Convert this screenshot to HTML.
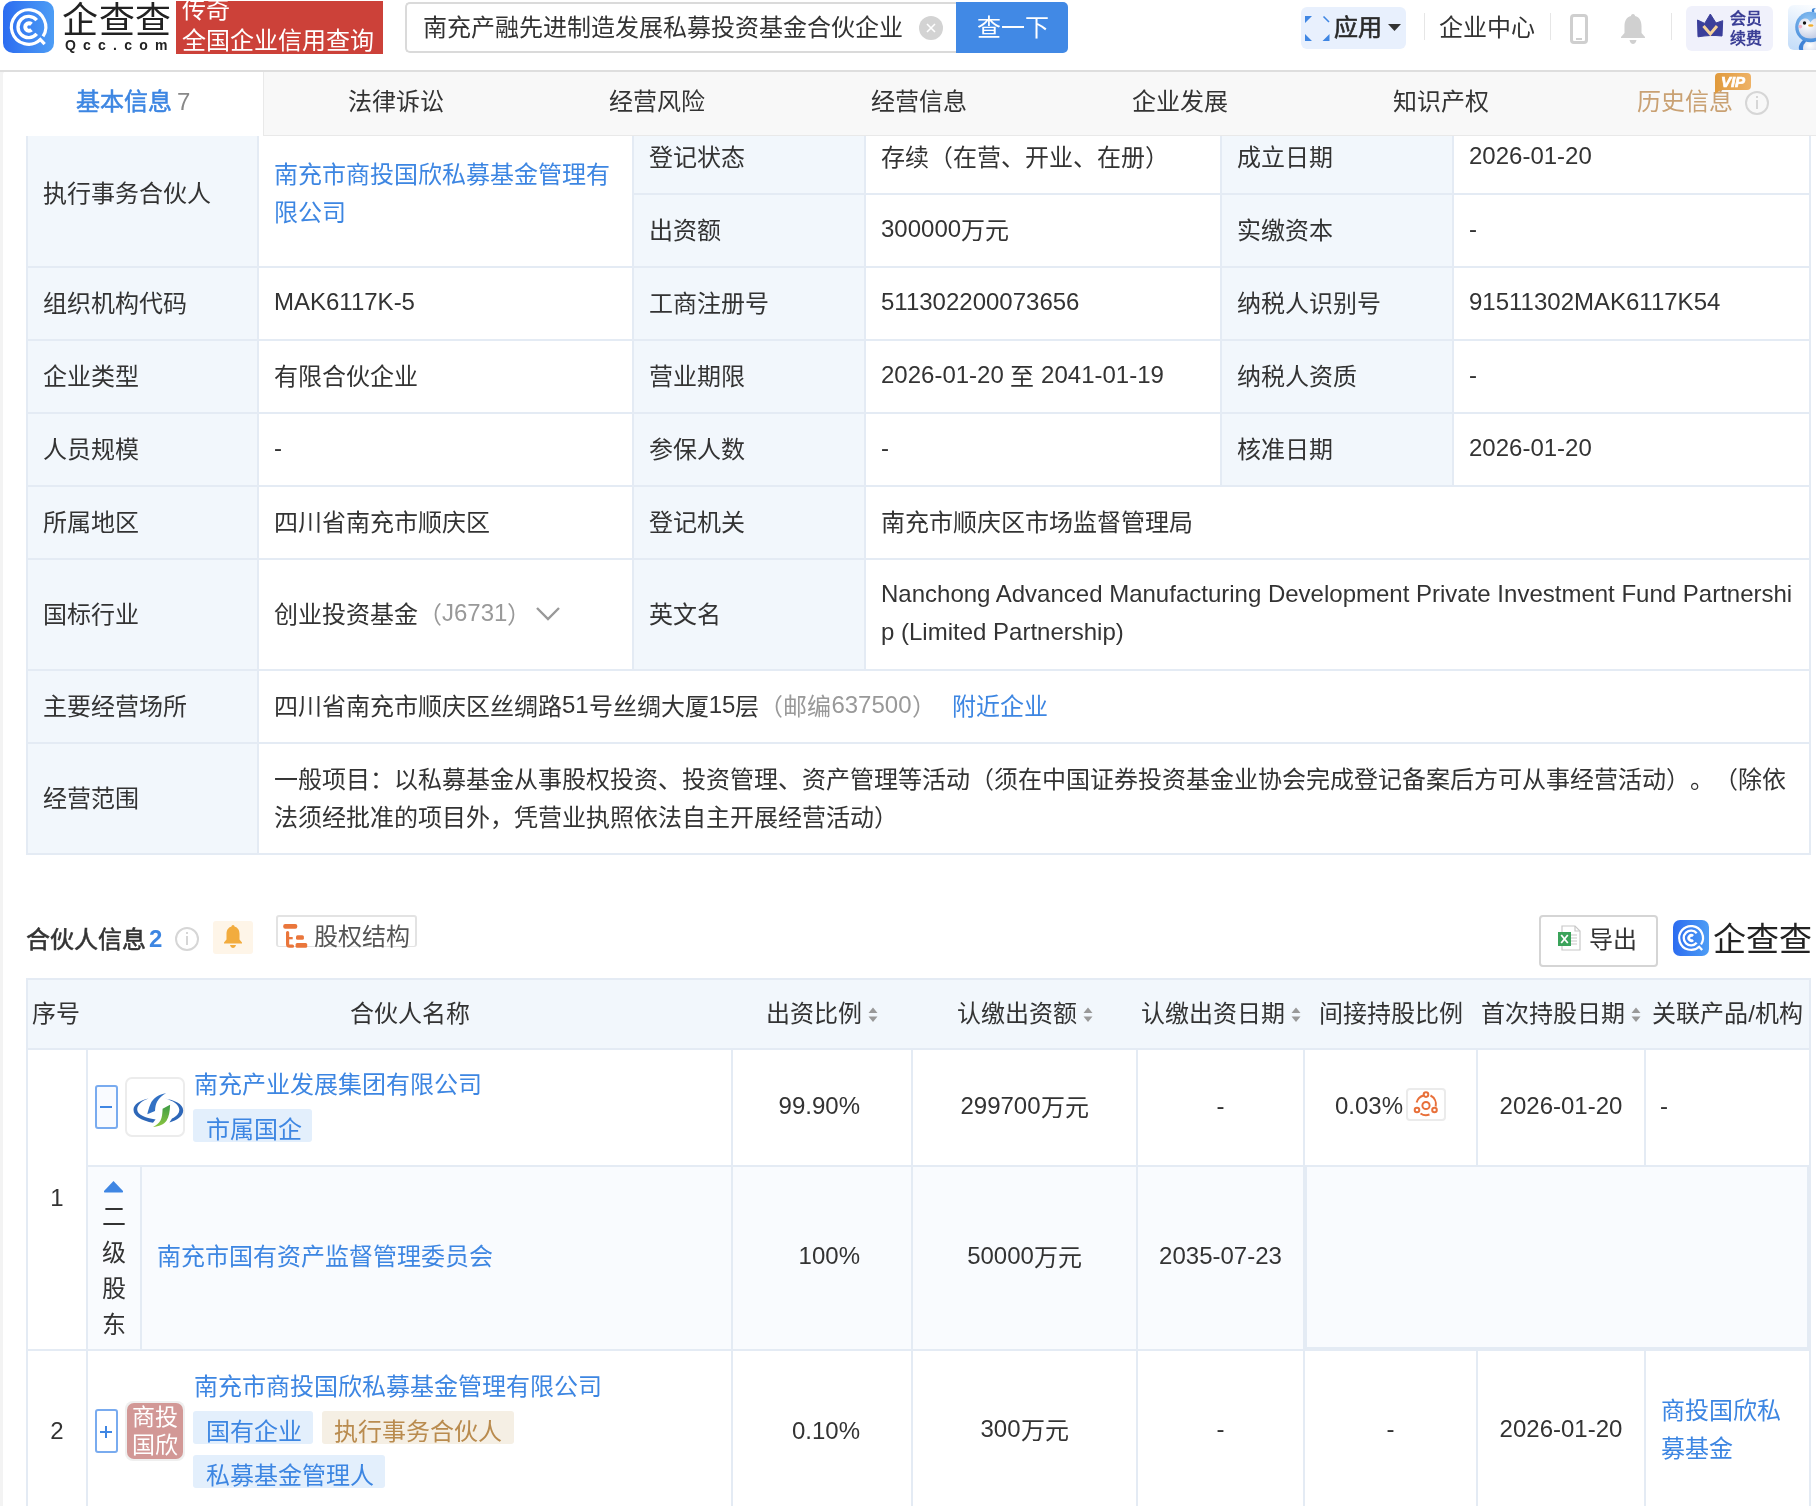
<!DOCTYPE html>
<html lang="zh-CN"><head><meta charset="utf-8"><title>qcc</title>
<style>
html,body{margin:0;padding:0;}
body{text-spacing-trim:space-all;width:1816px;height:1506px;overflow:hidden;position:relative;font-family:"Liberation Sans",sans-serif;font-size:24px;color:#333;line-height:38px;}
.a{position:absolute;}
.t{line-height:38px;}
svg{display:inline-block;}
</style></head><body>
<div id="root" style="position:absolute;left:0;top:0;width:1816px;height:1506px;overflow:hidden;will-change:transform">
<div class="a" style="left:0;top:0;width:1816px;height:1506px;background:#f3f3f3"></div>
<div class="a" style="left:0;top:0;width:1816px;height:71px;background:#fff"></div>
<div class="a" style="left:3px;top:71px;width:1813px;height:1435px;background:#fff;border-top-left-radius:4px"></div>
<div class="a" style="left:3px;top:1px;width:51px;height:52px;border-radius:10px;background:linear-gradient(90deg,#2c6cf0,#4d9df5);overflow:hidden">
<svg width="51" height="52" viewBox="0 0 51 52" style="position:absolute;left:0;top:0">
<path d="M40.03 35.37 A17.2 17.2 0 1 0 37.33 38.58" fill="none" stroke="#fff" stroke-width="3.2"/>
<path d="M36.24 37.41 L41.63 43.19" stroke="#fff" stroke-width="3.2"/>
<path d="M33.72 19.18 A10.6 10.6 0 1 0 33.72 32.82" fill="none" stroke="#fff" stroke-width="3.4"/>
<path d="M28.5 23.2 A3.75 3.75 0 1 0 28.5 28.8" fill="none" stroke="#fff" stroke-width="4"/>
</svg></div>
<div class="a" style="left:62px;top:1px;font-size:36px;line-height:40px;color:#222;letter-spacing:0.5px;font-weight:400">企查查</div>
<div class="a" style="left:65px;top:37px;font-size:14px;line-height:16px;color:#222;font-weight:bold;letter-spacing:7.2px">Qcc.com</div>
<div class="a" style="left:176px;top:1px;width:207px;height:53px;background:#cc4139;overflow:hidden"><div style="position:absolute;left:6px;top:-7px;color:#fff;font-size:24px;line-height:31px;white-space:nowrap">传奇<br>全国企业信用查询</div></div>
<div class="a" style="left:405px;top:2px;width:551px;height:51px;box-sizing:border-box;border:2px solid #dadada;border-right:none;border-radius:5px 0 0 5px;background:#fff"></div>
<div class="a" style="left:423px;top:10px;font-size:24px;line-height:36px;color:#333">南充产融先进制造发展私募投资基金合伙企业</div>
<div class="a" style="left:919px;top:16px;width:24px;height:24px;border-radius:50%;background:#d3d3d3"><svg width="24" height="24" style="position:absolute;left:0;top:0"><path d="M8 8 L16 16 M16 8 L8 16" stroke="#fff" stroke-width="1.6"/></svg></div>
<div class="a" style="left:956px;top:2px;width:112px;height:51px;background:#4189e5;border-radius:0 5px 5px 0"></div>
<div class="a" style="left:977px;top:9px;font-size:24px;line-height:38px;color:#fff">查一下</div>
<div class="a" style="left:1301px;top:7px;width:105px;height:42px;background:#e8f0fd;border-radius:6px"></div>
<svg class="a" style="left:1304px;top:15px" width="27" height="27" viewBox="0 0 27 27">
<path d="M1 1 H8 L1 8 Z M1 26 V19 L8 26 Z M25.5 26 H18.5 L25.5 19 Z" fill="#3f86e3"/>
<path d="M19.5 1.5 L25 7" stroke="#3f86e3" stroke-width="1.6"/></svg>
<div class="a" style="left:1334px;top:9px;font-size:24px;line-height:38px;color:#2a2a2a;-webkit-text-stroke:0.6px #2a2a2a">应用</div>
<svg class="a" style="left:1388px;top:24px" width="14" height="8"><path d="M0 0 H13 L6.5 7 Z" fill="#333"/></svg>
<div class="a " style="left:1424px;top:13px;width:1px;height:27px;background:#e6e6e6"></div>
<div class="a" style="left:1439px;top:9px;font-size:24px;line-height:38px;color:#333">企业中心</div>
<div class="a " style="left:1550px;top:13px;width:1px;height:27px;background:#e6e6e6"></div>
<div class="a" style="left:1570px;top:14px;width:18px;height:30px;box-sizing:border-box;border:3px solid #cfcfcf;border-radius:4px"></div>
<div class="a" style="left:1576px;top:38px;width:6px;height:2px;background:#cfcfcf"></div>
<svg class="a" style="left:1620px;top:13px" width="26" height="32" viewBox="0 0 26 32">
<path d="M13 1 C14.5 1 15 2 15 3 C19.5 4 21.5 8 21.5 13 V20 L25 24 V25 H1 V24 L4.5 20 V13 C4.5 8 6.5 4 11 3 C11 2 11.5 1 13 1 Z" fill="#d0d0d0"/>
<path d="M9.5 27 H16.5 C16 29.5 14.5 31 13 31 C11.5 31 10 29.5 9.5 27 Z" fill="#d0d0d0"/></svg>
<div class="a " style="left:1671px;top:13px;width:1px;height:27px;background:#e6e6e6"></div>
<div class="a" style="left:1686px;top:6px;width:87px;height:45px;background:#f0f1fb;border-radius:6px"></div>
<svg class="a" style="left:1697px;top:14px" width="27" height="24" viewBox="0 0 27 24">
<path d="M0.5 6 L7.7 9.4 L13.3 0 L19 9 L25.7 6.7 L25 22 C17 21 9 21.5 1 22.8 Z" fill="#3b3f9a" stroke="#3b3f9a" stroke-width="1" stroke-linejoin="round"/>
<path d="M6.5 12 L13.3 20 L20 12" fill="none" stroke="#f6d39a" stroke-width="3"/></svg>
<div class="a" style="left:1730px;top:9px;font-size:16px;line-height:20px;color:#3b3f96;font-weight:bold">会员<br>续费</div>
<div class="a" style="left:1788px;top:5px;width:40px;height:45px;border-radius:6px;background:linear-gradient(200deg,#fbfdff 10%,#dcebfc 55%,#c3dcf8);overflow:hidden">
<svg width="40" height="45" viewBox="0 0 40 45" style="position:absolute;left:0;top:0">
<defs><radialGradient id="hd" cx="0.45" cy="0.3" r="0.8"><stop offset="0" stop-color="#8cc3f3"/><stop offset="1" stop-color="#3f86d8"/></radialGradient>
<radialGradient id="bd" cx="0.35" cy="0.35" r="0.8"><stop offset="0" stop-color="#ffffff"/><stop offset="1" stop-color="#b9c4e0"/></radialGradient></defs>
<path d="M15 35 C11 39 10 43 11.5 45 L16 45 C17 41 18 37 19 35 Z" fill="#3f82d6"/>
<ellipse cx="25" cy="43" rx="10" ry="9" fill="url(#bd)"/>
<path d="M24 7 C23 4 25 2.5 28 3.5 C26 4 25.5 5.5 26.5 7 Z" fill="#3f86d8"/>
<circle cx="22.5" cy="22" r="15.3" fill="url(#hd)"/>
<path d="M10.5 22 C10.5 16 14 13.5 17.5 13.5 C20 13.5 21.5 15.5 22.5 17.5 C23.5 15.5 25.5 13.5 28 13.5 C32 13.5 36 17 36 23 C36 30 30 33.5 23 33.5 C15 33.5 10.5 29 10.5 22 Z" fill="url(#bd)"/>
<circle cx="16.5" cy="18" r="1.7" fill="#151515"/>
<circle cx="12.4" cy="21.6" r="1.8" fill="#f3b3c8"/>
<ellipse cx="22.8" cy="20.5" rx="2.7" ry="1.3" fill="#efae2f"/>
</svg></div>
<div class="a " style="left:0px;top:70px;width:1816px;height:2px;background:#dedede"></div>
<div class="a" style="left:263px;top:72px;width:1553px;height:63px;background:#f8f8f8;border-left:1px solid #e9e9e9;border-bottom:1px solid #e9e9e9"></div>
<div class="a" style="left:76px;top:83px;font-size:24px;line-height:38px;color:#3d86e2;-webkit-text-stroke:0.55px #3d86e2">基本信息</div>
<div class="a" style="left:177px;top:83px;font-size:24px;line-height:38px;color:#888">7</div>
<div class="a" style="left:348px;top:83px;font-size:24px;line-height:38px;color:#333">法律诉讼</div>
<div class="a" style="left:609px;top:83px;font-size:24px;line-height:38px;color:#333">经营风险</div>
<div class="a" style="left:871px;top:83px;font-size:24px;line-height:38px;color:#333">经营信息</div>
<div class="a" style="left:1132px;top:83px;font-size:24px;line-height:38px;color:#333">企业发展</div>
<div class="a" style="left:1393px;top:83px;font-size:24px;line-height:38px;color:#333">知识产权</div>
<div class="a" style="left:1637px;top:83px;font-size:24px;line-height:38px;color:#c9a173">历史信息</div>
<svg class="a" style="left:1714px;top:73px" width="38" height="22" viewBox="0 0 38 22">
<defs><linearGradient id="vg" x1="0" x2="1"><stop offset="0" stop-color="#e09a3c"/><stop offset="1" stop-color="#eeb266"/></linearGradient></defs>
<path d="M5 0 H33 Q37 0 37 4 V13 Q37 17 33 17 H7 L1 21 V4 Q1 0 5 0 Z" fill="url(#vg)"/>
<text x="19" y="14" text-anchor="middle" font-family="Liberation Sans" font-weight="bold" font-style="italic" font-size="15" fill="#fff" stroke="#fff" stroke-width="0.7">VIP</text></svg>
<div class="a" style="left:1745px;top:91px;width:24px;height:24px;box-sizing:border-box;border:2px solid #d6d6d6;border-radius:50%"></div>
<div class="a" style="left:1756px;top:96px;width:2px;height:2px;background:#d6d6d6"></div>
<div class="a" style="left:1756px;top:100px;width:2px;height:9px;background:#d6d6d6"></div>
<div class="a" style="left:0;top:136px;width:1816px;height:720px;overflow:hidden">
<div class="a" style="left:28px;top:-14px;width:229px;height:144px;display:flex;align-items:center;padding:0 15px;box-sizing:border-box;background:#f2f7fc;"><div class="t">执行事务合伙人</div></div>
<div class="a" style="left:259px;top:-14px;width:373px;height:144px;display:flex;align-items:center;padding:0 15px;box-sizing:border-box;"><div class="t"><span style="color:#3d86e2">南充市商投国欣私募基金管理有限公司</span></div></div>
<div class="a" style="left:634px;top:-14px;width:230px;height:71px;display:flex;align-items:center;padding:0 15px;box-sizing:border-box;background:#f2f7fc;"><div class="t">登记状态</div></div>
<div class="a" style="left:866px;top:-14px;width:354px;height:71px;display:flex;align-items:center;padding:0 15px;box-sizing:border-box;"><div class="t">存续（在营、开业、在册）</div></div>
<div class="a" style="left:1222px;top:-14px;width:230px;height:71px;display:flex;align-items:center;padding:0 15px;box-sizing:border-box;background:#f2f7fc;"><div class="t">成立日期</div></div>
<div class="a" style="left:1454px;top:-14px;width:355px;height:71px;display:flex;align-items:center;padding:0 15px;box-sizing:border-box;"><div class="t"><span style="position:relative;top:-2px">2026-01-20</span></div></div>
<div class="a" style="left:634px;top:59px;width:230px;height:71px;display:flex;align-items:center;padding:0 15px;box-sizing:border-box;background:#f2f7fc;"><div class="t">出资额</div></div>
<div class="a" style="left:866px;top:59px;width:354px;height:71px;display:flex;align-items:center;padding:0 15px;box-sizing:border-box;"><div class="t"><span style="position:relative;top:-2px">300000</span>万元</div></div>
<div class="a" style="left:1222px;top:59px;width:230px;height:71px;display:flex;align-items:center;padding:0 15px;box-sizing:border-box;background:#f2f7fc;"><div class="t">实缴资本</div></div>
<div class="a" style="left:1454px;top:59px;width:355px;height:71px;display:flex;align-items:center;padding:0 15px;box-sizing:border-box;"><div class="t"><span style="position:relative;top:-2px">-</span></div></div>
<div class="a" style="left:28px;top:132px;width:229px;height:71px;display:flex;align-items:center;padding:0 15px;box-sizing:border-box;background:#f2f7fc;"><div class="t">组织机构代码</div></div>
<div class="a" style="left:259px;top:132px;width:373px;height:71px;display:flex;align-items:center;padding:0 15px;box-sizing:border-box;"><div class="t"><span style="position:relative;top:-2px">MAK6117K-5</span></div></div>
<div class="a" style="left:634px;top:132px;width:230px;height:71px;display:flex;align-items:center;padding:0 15px;box-sizing:border-box;background:#f2f7fc;"><div class="t">工商注册号</div></div>
<div class="a" style="left:866px;top:132px;width:354px;height:71px;display:flex;align-items:center;padding:0 15px;box-sizing:border-box;"><div class="t"><span style="position:relative;top:-2px">511302200073656</span></div></div>
<div class="a" style="left:1222px;top:132px;width:230px;height:71px;display:flex;align-items:center;padding:0 15px;box-sizing:border-box;background:#f2f7fc;"><div class="t">纳税人识别号</div></div>
<div class="a" style="left:1454px;top:132px;width:355px;height:71px;display:flex;align-items:center;padding:0 15px;box-sizing:border-box;"><div class="t"><span style="position:relative;top:-2px">91511302MAK6117K54</span></div></div>
<div class="a" style="left:28px;top:205px;width:229px;height:71px;display:flex;align-items:center;padding:0 15px;box-sizing:border-box;background:#f2f7fc;"><div class="t">企业类型</div></div>
<div class="a" style="left:259px;top:205px;width:373px;height:71px;display:flex;align-items:center;padding:0 15px;box-sizing:border-box;"><div class="t">有限合伙企业</div></div>
<div class="a" style="left:634px;top:205px;width:230px;height:71px;display:flex;align-items:center;padding:0 15px;box-sizing:border-box;background:#f2f7fc;"><div class="t">营业期限</div></div>
<div class="a" style="left:866px;top:205px;width:354px;height:71px;display:flex;align-items:center;padding:0 15px;box-sizing:border-box;"><div class="t"><span style="position:relative;top:-2px">2026-01-20</span> 至 <span style="position:relative;top:-2px">2041-01-19</span></div></div>
<div class="a" style="left:1222px;top:205px;width:230px;height:71px;display:flex;align-items:center;padding:0 15px;box-sizing:border-box;background:#f2f7fc;"><div class="t">纳税人资质</div></div>
<div class="a" style="left:1454px;top:205px;width:355px;height:71px;display:flex;align-items:center;padding:0 15px;box-sizing:border-box;"><div class="t"><span style="position:relative;top:-2px">-</span></div></div>
<div class="a" style="left:28px;top:278px;width:229px;height:71px;display:flex;align-items:center;padding:0 15px;box-sizing:border-box;background:#f2f7fc;"><div class="t">人员规模</div></div>
<div class="a" style="left:259px;top:278px;width:373px;height:71px;display:flex;align-items:center;padding:0 15px;box-sizing:border-box;"><div class="t"><span style="position:relative;top:-2px">-</span></div></div>
<div class="a" style="left:634px;top:278px;width:230px;height:71px;display:flex;align-items:center;padding:0 15px;box-sizing:border-box;background:#f2f7fc;"><div class="t">参保人数</div></div>
<div class="a" style="left:866px;top:278px;width:354px;height:71px;display:flex;align-items:center;padding:0 15px;box-sizing:border-box;"><div class="t"><span style="position:relative;top:-2px">-</span></div></div>
<div class="a" style="left:1222px;top:278px;width:230px;height:71px;display:flex;align-items:center;padding:0 15px;box-sizing:border-box;background:#f2f7fc;"><div class="t">核准日期</div></div>
<div class="a" style="left:1454px;top:278px;width:355px;height:71px;display:flex;align-items:center;padding:0 15px;box-sizing:border-box;"><div class="t"><span style="position:relative;top:-2px">2026-01-20</span></div></div>
<div class="a" style="left:28px;top:351px;width:229px;height:71px;display:flex;align-items:center;padding:0 15px;box-sizing:border-box;background:#f2f7fc;"><div class="t">所属地区</div></div>
<div class="a" style="left:259px;top:351px;width:373px;height:71px;display:flex;align-items:center;padding:0 15px;box-sizing:border-box;"><div class="t">四川省南充市顺庆区</div></div>
<div class="a" style="left:634px;top:351px;width:230px;height:71px;display:flex;align-items:center;padding:0 15px;box-sizing:border-box;background:#f2f7fc;"><div class="t">登记机关</div></div>
<div class="a" style="left:866px;top:351px;width:943px;height:71px;display:flex;align-items:center;padding:0 15px;box-sizing:border-box;"><div class="t">南充市顺庆区市场监督管理局</div></div>
<div class="a" style="left:28px;top:424px;width:229px;height:109px;display:flex;align-items:center;padding:0 15px;box-sizing:border-box;background:#f2f7fc;"><div class="t">国标行业</div></div>
<div class="a" style="left:259px;top:424px;width:373px;height:109px;display:flex;align-items:center;padding:0 15px;box-sizing:border-box;"><div class="t">创业投资基金<span style="color:#999">（<span style="position:relative;top:-2px">J6731</span>）</span><svg width="26" height="16" style="position:relative;top:-1px;margin-left:4px" viewBox="0 0 26 16"><path d="M2 2 L13 13 L24 2" fill="none" stroke="#999" stroke-width="2.4"/></svg></div></div>
<div class="a" style="left:634px;top:424px;width:230px;height:109px;display:flex;align-items:center;padding:0 15px;box-sizing:border-box;background:#f2f7fc;"><div class="t">英文名</div></div>
<div class="a" style="left:866px;top:424px;width:943px;height:109px;display:flex;align-items:center;padding:0 15px;box-sizing:border-box;"><div class="t"><span style="word-break:break-all"><span style="position:relative;top:-2px">Nanchong Advanced Manufacturing Development Private Investment Fund Partnership (Limited Partnership)</span></span></div></div>
<div class="a" style="left:28px;top:535px;width:229px;height:71px;display:flex;align-items:center;padding:0 15px;box-sizing:border-box;background:#f2f7fc;"><div class="t">主要经营场所</div></div>
<div class="a" style="left:259px;top:535px;width:1550px;height:71px;display:flex;align-items:center;padding:0 15px;box-sizing:border-box;"><div class="t">四川省南充市顺庆区丝绸路<span style="position:relative;top:-2px">51</span>号丝绸大厦<span style="position:relative;top:-2px">15</span>层<span style="color:#999">（邮编<span style="position:relative;top:-2px">637500</span>）</span><span style="color:#3d86e2;margin-left:16px">附近企业</span></div></div>
<div class="a" style="left:28px;top:608px;width:229px;height:109px;display:flex;align-items:center;padding:0 15px;box-sizing:border-box;background:#f2f7fc;"><div class="t">经营范围</div></div>
<div class="a" style="left:259px;top:608px;width:1550px;height:109px;display:flex;align-items:center;padding:0 15px;box-sizing:border-box;"><div class="t">一般项目：以私募基金从事股权投资、投资管理、资产管理等活动（须在中国证券投资基金业协会完成登记备案后方可从事经营活动）。（除依<br>法须经批准的项目外，凭营业执照依法自主开展经营活动）</div></div>
<div class="a" style="left:26px;top:130px;width:1785px;height:2px;background:#e4ebf4"></div>
<div class="a" style="left:26px;top:203px;width:1785px;height:2px;background:#e4ebf4"></div>
<div class="a" style="left:26px;top:276px;width:1785px;height:2px;background:#e4ebf4"></div>
<div class="a" style="left:26px;top:349px;width:1785px;height:2px;background:#e4ebf4"></div>
<div class="a" style="left:26px;top:422px;width:1785px;height:2px;background:#e4ebf4"></div>
<div class="a" style="left:26px;top:533px;width:1785px;height:2px;background:#e4ebf4"></div>
<div class="a" style="left:26px;top:606px;width:1785px;height:2px;background:#e4ebf4"></div>
<div class="a" style="left:26px;top:717px;width:1785px;height:2px;background:#e4ebf4"></div>
<div class="a" style="left:632px;top:57px;width:1179px;height:2px;background:#e4ebf4"></div>
<div class="a" style="left:26px;top:-16px;width:2px;height:735px;background:#e4ebf4"></div>
<div class="a" style="left:1809px;top:-16px;width:2px;height:735px;background:#e4ebf4"></div>
<div class="a" style="left:257px;top:-16px;width:2px;height:735px;background:#e4ebf4"></div>
<div class="a" style="left:632px;top:-16px;width:2px;height:549px;background:#e4ebf4"></div>
<div class="a" style="left:864px;top:-16px;width:2px;height:549px;background:#e4ebf4"></div>
<div class="a" style="left:1220px;top:-16px;width:2px;height:365px;background:#e4ebf4"></div>
<div class="a" style="left:1452px;top:-16px;width:2px;height:365px;background:#e4ebf4"></div>
</div>
<div class="a" style="left:26px;top:921px;font-size:24px;line-height:38px;color:#333;-webkit-text-stroke:0.55px #333">合伙人信息</div>
<div class="a" style="left:149px;top:920px;font-size:24px;line-height:38px;color:#3d86e2;font-weight:bold">2</div>
<div class="a" style="left:175px;top:927px;width:24px;height:24px;box-sizing:border-box;border:2px solid #d6d6d6;border-radius:50%"></div>
<div class="a" style="left:186px;top:932px;width:2px;height:2px;background:#d6d6d6"></div>
<div class="a" style="left:186px;top:936px;width:2px;height:9px;background:#d6d6d6"></div>
<div class="a" style="left:213px;top:921px;width:40px;height:33px;background:#fef5e8;border-radius:3px"></div>
<svg class="a" style="left:223px;top:924px" width="20" height="25" viewBox="0 0 20 25">
<path d="M10 1 C11 1 11.5 1.8 11.5 2.5 C15 3.5 16.5 6.5 16.5 10 V15.5 L19 18.5 V19.5 H1 V18.5 L3.5 15.5 V10 C3.5 6.5 5 3.5 8.5 2.5 C8.5 1.8 9 1 10 1 Z" fill="#f2ac3e"/>
<path d="M7 21 H13 C12.5 23 11.3 24 10 24 C8.7 24 7.5 23 7 21 Z" fill="#f2ac3e"/></svg>
<div class="a" style="left:276px;top:915px;width:141px;height:32px;box-sizing:border-box;border:2px solid #e3e3e3;border-bottom:1px solid #e3e3e3;border-radius:3px"></div>
<svg class="a" style="left:283px;top:923px" width="26" height="26" viewBox="0 0 26 26">
<rect x="0.2" y="1.1" width="14.1" height="4.6" rx="2" fill="#ea763b"/>
<path d="M4.6 9.5 V21.3 Q4.6 23.2 6.6 23.2 H9.5" fill="none" stroke="#ea763b" stroke-width="3.2" stroke-linecap="round"/>
<rect x="4.8" y="14" width="4.9" height="2.3" fill="#ea763b"/>
<rect x="13" y="12.3" width="7.9" height="4.5" rx="1.5" fill="#ea763b"/>
<rect x="12.6" y="20.1" width="11.6" height="4.6" rx="1.5" fill="#ea763b"/></svg>
<div class="a" style="left:314px;top:918px;font-size:24px;line-height:38px;color:#555">股权结构</div>
<div class="a" style="left:1539px;top:915px;width:119px;height:52px;box-sizing:border-box;border:2px solid #d5d5d5;border-radius:4px"></div>
<svg class="a" style="left:1557px;top:925px" width="25" height="26" viewBox="0 0 25 26">
<path d="M5 1 H18 L23 6 V25 H5 Z" fill="#fff" stroke="#c8c8c8" stroke-width="1.2"/>
<path d="M18 1 V6 H23" fill="none" stroke="#c8c8c8" stroke-width="1.2"/>
<path d="M14 10 H20 M14 13 H20 M14 16 H20 M14 19 H20" stroke="#c8c8c8" stroke-width="1.2"/>
<rect x="1" y="7" width="13" height="14" fill="#3aa35a"/>
<path d="M4.2 10 L10.8 18 M10.8 10 L4.2 18" stroke="#fff" stroke-width="1.8"/></svg>
<div class="a" style="left:1589px;top:921px;font-size:24px;line-height:38px;color:#333">导出</div>
<div class="a" style="left:1673px;top:920px;width:36px;height:36px;border-radius:7px;background:linear-gradient(90deg,#2c6cf0,#4d9df5);overflow:hidden">
<svg width="36" height="36" viewBox="0 0 51 52" style="position:absolute;left:0;top:0">
<path d="M40.03 35.37 A17.2 17.2 0 1 0 37.33 38.58" fill="none" stroke="#fff" stroke-width="3.2"/>
<path d="M36.24 37.41 L41.63 43.19" stroke="#fff" stroke-width="3.2"/>
<path d="M33.72 19.18 A10.6 10.6 0 1 0 33.72 32.82" fill="none" stroke="#fff" stroke-width="3.4"/>
<path d="M28.5 23.2 A3.75 3.75 0 1 0 28.5 28.8" fill="none" stroke="#fff" stroke-width="4"/>
</svg></div>
<div class="a" style="left:1713px;top:920px;font-size:33px;line-height:40px;color:#222;letter-spacing:0px">企查查</div>
<div class="a " style="left:26px;top:978px;width:1785px;height:72px;background:#f2f7fc"></div>
<div class="a " style="left:26px;top:978px;width:1785px;height:2px;background:#e4ebf4"></div>
<div class="a " style="left:26px;top:1048px;width:1785px;height:2px;background:#e4ebf4"></div>
<div class="a " style="left:26px;top:978px;width:2px;height:528px;background:#e4ebf4"></div>
<div class="a " style="left:1809px;top:978px;width:2px;height:528px;background:#e4ebf4"></div>
<div class="a " style="left:26px;top:980px;width:60px;height:68px;display:flex;align-items:center;justify-content:center;white-space:nowrap"><div class="t">序号</div></div>
<div class="a " style="left:88px;top:980px;width:643px;height:68px;display:flex;align-items:center;justify-content:center;white-space:nowrap"><div class="t">合伙人名称</div></div>
<div class="a " style="left:733px;top:980px;width:178px;height:68px;display:flex;align-items:center;justify-content:center;white-space:nowrap"><div class="t">出资比例<svg width="10" height="16" style="margin-left:6px;position:relative;top:1px" viewBox="0 0 10 16"><path d="M0.5 6 L5 0.5 L9.5 6 Z M0.5 9.5 L5 15 L9.5 9.5 Z" fill="#999"/></svg></div></div>
<div class="a " style="left:913px;top:980px;width:223px;height:68px;display:flex;align-items:center;justify-content:center;white-space:nowrap"><div class="t">认缴出资额<svg width="10" height="16" style="margin-left:6px;position:relative;top:1px" viewBox="0 0 10 16"><path d="M0.5 6 L5 0.5 L9.5 6 Z M0.5 9.5 L5 15 L9.5 9.5 Z" fill="#999"/></svg></div></div>
<div class="a " style="left:1138px;top:980px;width:165px;height:68px;display:flex;align-items:center;justify-content:center;white-space:nowrap"><div class="t">认缴出资日期<svg width="10" height="16" style="margin-left:6px;position:relative;top:1px" viewBox="0 0 10 16"><path d="M0.5 6 L5 0.5 L9.5 6 Z M0.5 9.5 L5 15 L9.5 9.5 Z" fill="#999"/></svg></div></div>
<div class="a " style="left:1305px;top:980px;width:171px;height:68px;display:flex;align-items:center;justify-content:center;white-space:nowrap"><div class="t">间接持股比例</div></div>
<div class="a " style="left:1478px;top:980px;width:166px;height:68px;display:flex;align-items:center;justify-content:center;white-space:nowrap"><div class="t">首次持股日期<svg width="10" height="16" style="margin-left:6px;position:relative;top:1px" viewBox="0 0 10 16"><path d="M0.5 6 L5 0.5 L9.5 6 Z M0.5 9.5 L5 15 L9.5 9.5 Z" fill="#999"/></svg></div></div>
<div class="a " style="left:1646px;top:980px;width:163px;height:68px;display:flex;align-items:center;justify-content:center;white-space:nowrap"><div class="t">关联产品/机构</div></div>
<div class="a " style="left:86px;top:1050px;width:2px;height:115px;background:#e4ebf4"></div>
<div class="a " style="left:731px;top:1050px;width:2px;height:115px;background:#e4ebf4"></div>
<div class="a " style="left:911px;top:1050px;width:2px;height:115px;background:#e4ebf4"></div>
<div class="a " style="left:1136px;top:1050px;width:2px;height:115px;background:#e4ebf4"></div>
<div class="a " style="left:1303px;top:1050px;width:2px;height:115px;background:#e4ebf4"></div>
<div class="a " style="left:1476px;top:1050px;width:2px;height:115px;background:#e4ebf4"></div>
<div class="a " style="left:1644px;top:1050px;width:2px;height:115px;background:#e4ebf4"></div>
<div class="a " style="left:86px;top:1050px;width:2px;height:456px;background:#e4ebf4"></div>
<div class="a " style="left:88px;top:1165px;width:1723px;height:2px;background:#e4ebf4"></div>
<div class="a " style="left:28px;top:1050px;width:58px;height:299px;display:flex;align-items:center;justify-content:center;white-space:nowrap;"><div class="t"><span style="position:relative;top:-2px">1</span></div></div>
<div class="a" style="left:95px;top:1085px;width:23px;height:44px;box-sizing:border-box;border:2px solid #79abef;border-radius:3px;background:#f9fbff"></div>
<div class="a" style="left:100px;top:1105.5px;width:12px;height:2.6px;background:#3f86e3"></div>
<div class="a" style="left:125px;top:1077px;width:60px;height:60px;box-sizing:border-box;border:2px solid #ececec;border-radius:7px;background:#fff"></div>
<svg class="a" style="left:125.7px;top:1077.5px" width="59" height="59" viewBox="0 0 59 59">
<defs><linearGradient id="gg" x1="0" y1="0" x2="0" y2="1"><stop offset="0" stop-color="#3d9b45"/><stop offset="1" stop-color="#8cc63f"/></linearGradient></defs>
<path d="M22.6 20.6 C14 22.5 7.5 26.5 7.5 31.8 C7.5 38.5 16 43 27 44.7 L29.6 41.6 C19 40 11.2 36.5 11.2 31.6 C11.2 27 15.5 23 22.6 20.6 Z" fill="#2e67b8"/>
<path d="M38.8 20.6 C48 22 57.2 26 57.2 32.4 C57.2 38 51 42 43.4 44.5 L46 40.5 C50.5 38.5 53.3 35.5 53.3 31.8 C53.3 27 47 22.5 38.8 20.6 Z" fill="#2e67b8"/>
<path d="M40.1 15.3 C33 16.5 27 20 24.5 26 C22.8 30 22 33 21.3 36.2 L29 32.9 C29.2 29 29.8 26 31.2 23.5 C33.2 20 36.5 17 40.1 15.3 Z" fill="#3271c4"/>
<path d="M44.1 26.7 L36.6 30.7 C36.4 35 36.1 39.5 34.5 42.5 C32.8 45.5 30 47.6 27 49.1 C33 48.5 38 46.5 40.5 42.8 C43 39 43.9 33 44.1 26.7 Z" fill="url(#gg)"/>
</svg>
<div class="a" style="left:194px;top:1066px;font-size:24px;line-height:38px;color:#3d86e2">南充产业发展集团有限公司</div>
<div class="a" style="left:193px;top:1109px;width:119px;height:33px;background:#e3effc;border-radius:3px"></div>
<div class="a" style="left:206px;top:1113px;font-size:24px;line-height:34px;color:#3d86e2">市属国企</div>
<div class="a " style="left:733px;top:1050px;width:127px;height:115px;display:flex;align-items:center;justify-content:flex-end;white-space:nowrap"><div class="t"><span style="position:relative;top:-2px">99.90%</span></div></div>
<div class="a " style="left:913px;top:1050px;width:223px;height:115px;display:flex;align-items:center;justify-content:center;white-space:nowrap;"><div class="t"><span style="position:relative;top:-2px">299700</span>万元</div></div>
<div class="a " style="left:1138px;top:1050px;width:165px;height:115px;display:flex;align-items:center;justify-content:center;white-space:nowrap;"><div class="t"><span style="position:relative;top:-2px">-</span></div></div>
<div class="a" style="left:1335px;top:1089px;font-size:24px;line-height:34px;color:#333">0.03%</div>
<div class="a" style="left:1406px;top:1088px;width:40px;height:33px;box-sizing:border-box;border:2px solid #ebebeb;border-radius:4px"></div>
<svg class="a" style="left:1412px;top:1091px" width="28" height="28" viewBox="0 0 28 28">
<g fill="none" stroke="#e8703a" stroke-width="2">
<circle cx="14" cy="14.5" r="3.6"/>
<path d="M11.5 4.5 A10 10 0 0 0 4.6 11.5"/>
<path d="M18.5 4.5 A10 10 0 0 1 23.7 15.5"/>
<path d="M8.5 22.5 A10 10 0 0 0 17.5 23.5"/>
<circle cx="14" cy="3.6" r="2.3"/><circle cx="5" cy="19" r="2.3"/><circle cx="22.5" cy="19" r="2.3"/>
</g></svg>
<div class="a " style="left:1478px;top:1050px;width:166px;height:115px;display:flex;align-items:center;justify-content:center;white-space:nowrap;"><div class="t"><span style="position:relative;top:-2px">2026-01-20</span></div></div>
<div class="a" style="left:1660px;top:1087px;font-size:24px;line-height:38px;color:#333">-</div>
<div class="a " style="left:88px;top:1167px;width:1721px;height:182px;background:#f9fbfe"></div>
<div class="a " style="left:140px;top:1165px;width:2px;height:184px;background:#e4ebf4"></div>
<div class="a " style="left:731px;top:1165px;width:2px;height:184px;background:#e4ebf4"></div>
<div class="a " style="left:911px;top:1165px;width:2px;height:184px;background:#e4ebf4"></div>
<div class="a " style="left:1136px;top:1165px;width:2px;height:184px;background:#e4ebf4"></div>
<div class="a " style="left:26px;top:1349px;width:1785px;height:2px;background:#e4ebf4"></div>
<div class="a " style="left:1303px;top:1165px;width:4px;height:186px;background:#e4ebf4"></div>
<div class="a " style="left:1807px;top:1165px;width:4px;height:186px;background:#e4ebf4"></div>
<div class="a " style="left:1303px;top:1347px;width:508px;height:4px;background:#e4ebf4"></div>
<svg class="a" style="left:103px;top:1180px" width="21" height="13" viewBox="0 0 21 13"><path d="M10.5 1 L20 11 Q20.5 12.5 19 12.5 H2 Q0.5 12.5 1 11 Z" fill="#3f86e3"/></svg>
<div class="a" style="left:102px;top:1199px;font-size:24px;line-height:36px;color:#333">二<br>级<br>股<br>东</div>
<div class="a" style="left:157px;top:1238px;font-size:24px;line-height:38px;color:#3d86e2">南充市国有资产监督管理委员会</div>
<div class="a " style="left:733px;top:1167px;width:127px;height:182px;display:flex;align-items:center;justify-content:flex-end;white-space:nowrap"><div class="t"><span style="position:relative;top:-2px">100%</span></div></div>
<div class="a " style="left:913px;top:1167px;width:223px;height:182px;display:flex;align-items:center;justify-content:center;white-space:nowrap;"><div class="t"><span style="position:relative;top:-2px">50000</span>万元</div></div>
<div class="a " style="left:1138px;top:1167px;width:165px;height:182px;display:flex;align-items:center;justify-content:center;white-space:nowrap;"><div class="t"><span style="position:relative;top:-2px">2035-07-23</span></div></div>
<div class="a " style="left:731px;top:1351px;width:2px;height:155px;background:#e4ebf4"></div>
<div class="a " style="left:911px;top:1351px;width:2px;height:155px;background:#e4ebf4"></div>
<div class="a " style="left:1136px;top:1351px;width:2px;height:155px;background:#e4ebf4"></div>
<div class="a " style="left:1303px;top:1351px;width:2px;height:155px;background:#e4ebf4"></div>
<div class="a " style="left:1476px;top:1351px;width:2px;height:155px;background:#e4ebf4"></div>
<div class="a " style="left:1644px;top:1351px;width:2px;height:155px;background:#e4ebf4"></div>
<div class="a " style="left:28px;top:1351px;width:58px;height:163px;display:flex;align-items:center;justify-content:center;white-space:nowrap;"><div class="t"><span style="position:relative;top:-2px">2</span></div></div>
<div class="a" style="left:95px;top:1409px;width:23px;height:44px;box-sizing:border-box;border:2px solid #79abef;border-radius:3px;background:#fff"></div>
<div class="a" style="left:100px;top:1430.5px;width:12px;height:2.6px;background:#3f86e3"></div>
<div class="a" style="left:104.7px;top:1426px;width:2.6px;height:11.5px;background:#3f86e3"></div>
<div class="a" style="left:125px;top:1401px;width:60px;height:60px;border-radius:8px;background:#efefef"></div>
<div class="a" style="left:127px;top:1403px;width:56px;height:56px;border-radius:7px;background:#d29896;overflow:hidden"><div style="position:absolute;left:5px;top:-0.5px;color:#fff;font-size:23px;line-height:28.5px;white-space:nowrap">商投<br>国欣</div></div>
<div class="a" style="left:194px;top:1368px;font-size:24px;line-height:38px;color:#3d86e2">南充市商投国欣私募基金管理有限公司</div>
<div class="a" style="left:193px;top:1411px;width:120px;height:33px;background:#e3effc;border-radius:3px"></div>
<div class="a" style="left:206px;top:1415px;font-size:24px;line-height:34px;color:#3d86e2">国有企业</div>
<div class="a" style="left:322px;top:1411px;width:192px;height:33px;background:#f5efe4;border-radius:3px"></div>
<div class="a" style="left:334px;top:1415px;font-size:24px;line-height:34px;color:#b98b4e">执行事务合伙人</div>
<div class="a" style="left:193px;top:1455px;width:192px;height:33px;background:#e3effc;border-radius:3px"></div>
<div class="a" style="left:206px;top:1459px;font-size:24px;line-height:34px;color:#3d86e2">私募基金管理人</div>
<div class="a" style="left:733px;top:1413px;font-size:24px;line-height:36px;color:#333;width:127px;text-align:right">0.10%</div>
<div class="a " style="left:913px;top:1351px;width:223px;height:159px;display:flex;align-items:center;justify-content:center;white-space:nowrap;"><div class="t"><span style="position:relative;top:-2px">300</span>万元</div></div>
<div class="a " style="left:1138px;top:1351px;width:165px;height:159px;display:flex;align-items:center;justify-content:center;white-space:nowrap;"><div class="t"><span style="position:relative;top:-2px">-</span></div></div>
<div class="a " style="left:1305px;top:1351px;width:171px;height:159px;display:flex;align-items:center;justify-content:center;white-space:nowrap;"><div class="t"><span style="position:relative;top:-2px">-</span></div></div>
<div class="a " style="left:1478px;top:1351px;width:166px;height:159px;display:flex;align-items:center;justify-content:center;white-space:nowrap;"><div class="t"><span style="position:relative;top:-2px">2026-01-20</span></div></div>
<div class="a" style="left:1661px;top:1392px;font-size:24px;line-height:38px;color:#3d86e2">商投国欣私<br>募基金</div>
</div></body></html>
